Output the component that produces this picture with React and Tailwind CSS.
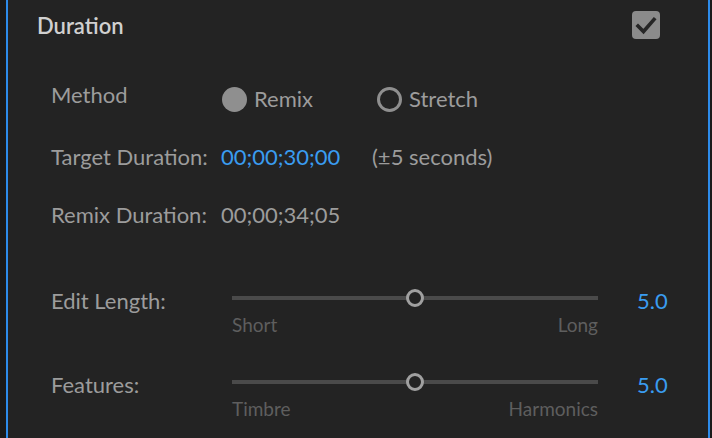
import React from "react";

const FONT = { fontFamily: "Lato, 'Open Sans', sans-serif" };

function Slider({ left, right }) {
  return (
    <div className="ml-[11px] w-[366px] flex flex-col">
      <div className="relative h-[20px] flex items-center">
        <div className="h-[4px] w-full bg-[#4a4a4a]" />
        <div className="absolute left-1/2 top-1/2 -translate-x-1/2 -translate-y-1/2 w-[18px] h-[18px] rounded-full border-[3px] border-[#a0a0a0] bg-[#232323]" />
      </div>
      <div className="mt-[6px] flex justify-between text-[19px] leading-[22px] text-[#5e5e5e]">
        <span>{left}</span>
        <span>{right}</span>
      </div>
    </div>
  );
}

function SliderRow({ label, left, right, value, mt }) {
  return (
    <div className={`flex items-start ${mt}`}>
      <div className="w-[170px] h-[26px]">{label}</div>
      <Slider left={left} right={right} />
      <div className="ml-[39px] text-[#3a9cf0]">{value}</div>
    </div>
  );
}

export default function App() {
  return (
    <div className="w-[712px] h-[438px] bg-[#1a1a1a] flex overflow-hidden" style={FONT}>
      <div className="ml-[6px] mr-[2px] flex-1 border-x-2 border-[#2d8ceb] bg-[#232323]">
        {/* header */}
        <div className="mt-[11px] h-[28px] pl-[29px] pr-[48px] flex items-start justify-between">
          <div className="pt-[2px] text-[22px] leading-[26px] font-semibold text-[#d0d0d0]">Duration</div>
          <div className="w-[28px] h-[28px] rounded-[4px] bg-[#8b8b8b]">
            <svg width="28" height="28" viewBox="0 0 28 28">
              <path d="M6 15 L11.5 20.5 L22 8.5" fill="none" stroke="#262626" strokeWidth="3.6" strokeLinecap="square" />
            </svg>
          </div>
        </div>

        <div className="pl-[43px] text-[22px] leading-[26px] text-[#9c9c9c]">
          {/* method */}
          <div className="mt-[43px] flex items-start">
            <div className="w-[171px] h-[26px]">Method</div>
            <div className="mt-[4px] flex items-center">
              <div className="w-[155px] flex items-center gap-[7px]">
                <div className="w-[25px] h-[25px] rounded-full bg-[#8f8f8f]" />
                <span>Remix</span>
              </div>
              <div className="flex items-center gap-[7px]">
                <div className="w-[25px] h-[25px] rounded-full border-[3px] border-[#8f8f8f]" />
                <span>Stretch</span>
              </div>
            </div>
          </div>

          {/* target */}
          <div className="mt-[32px] flex items-start">
            <div className="w-[170px]">Target Duration:</div>
            <div className="w-[151px] text-[#3a9cf0]">00;00;30;00</div>
            <div>(±5 seconds)</div>
          </div>

          {/* remix */}
          <div className="mt-[32px] flex items-start">
            <div className="w-[170px]">Remix Duration:</div>
            <div>00;00;34;05</div>
          </div>

          <SliderRow mt="mt-[60px]" label="Edit Length:" left="Short" right="Long" value="5.0" />
          <SliderRow mt="mt-[36px]" label="Features:" left="Timbre" right="Harmonics" value="5.0" />
        </div>
      </div>
    </div>
  );
}
